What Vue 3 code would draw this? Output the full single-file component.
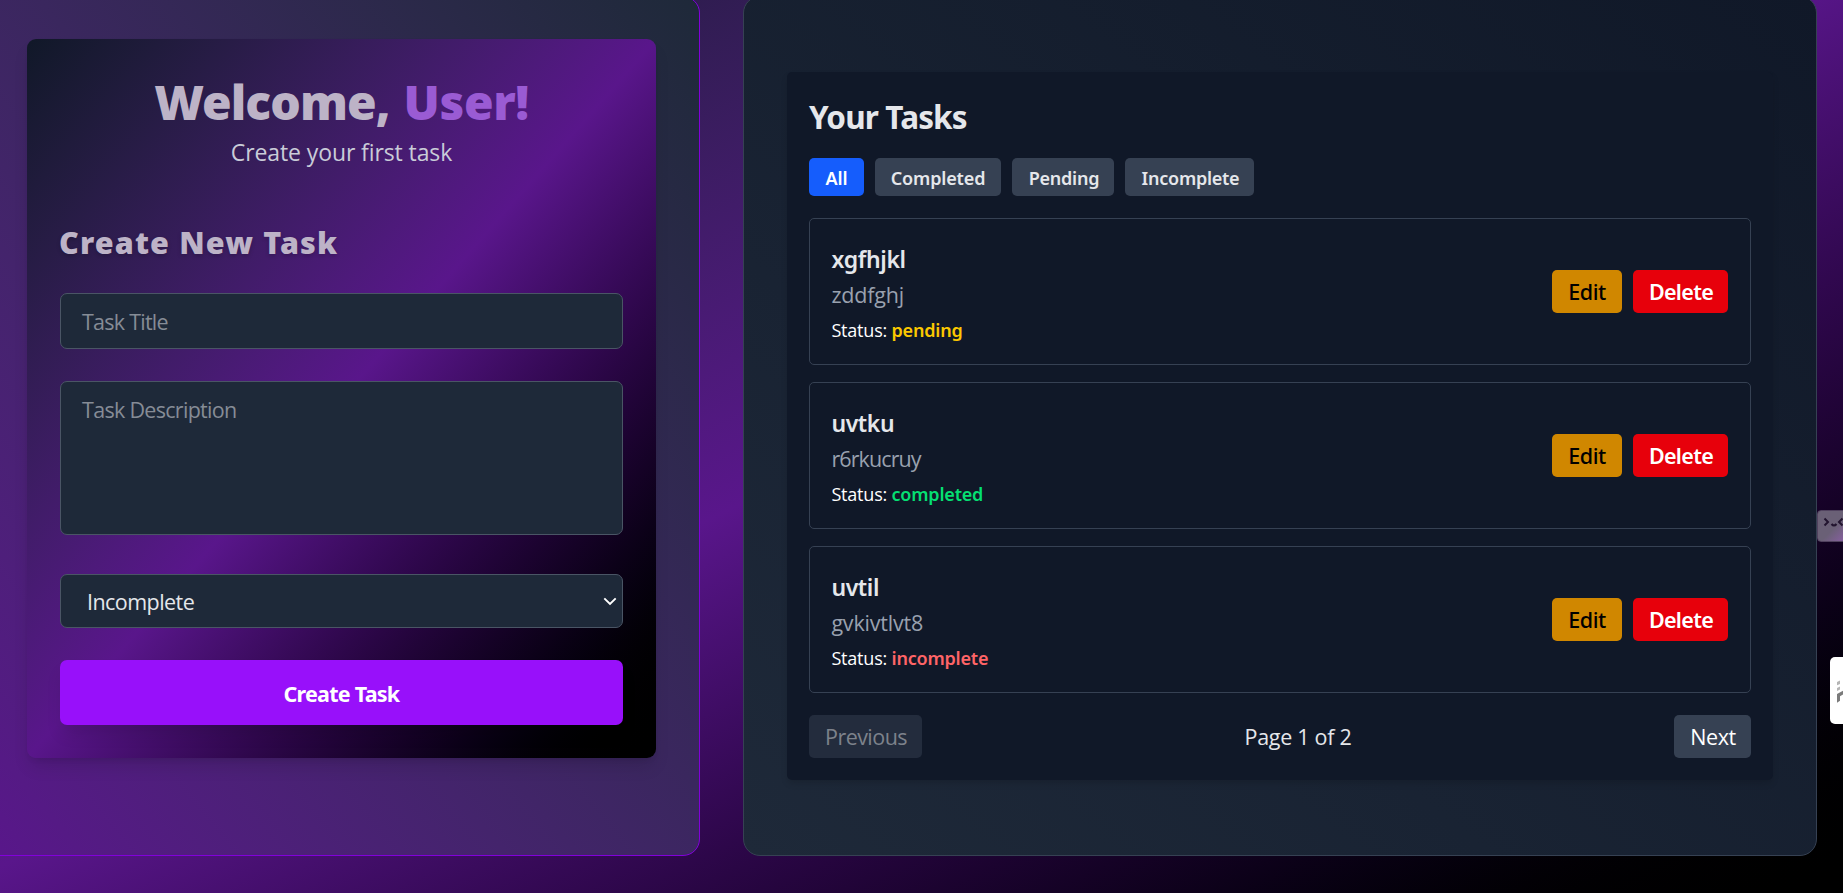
<script setup>
import { ref } from 'vue'

const filters = [
  { label: 'All', size: 'w-all' },
  { label: 'Completed', size: 'w-completed' },
  { label: 'Pending', size: 'w-pending' },
  { label: 'Incomplete', size: 'w-incomplete' },
]
const active = ref('All')

const tasks = [
  { title: 'xgfhjkl', text: 'zddfghj', status: 'pending' },
  { title: 'uvtku', text: 'r6rkucruy', status: 'completed' },
  { title: 'uvtil', text: 'gvkivtlvt8', status: 'incomplete' },
]
</script>

<template>
  <div class="viewport">
    <main class="page">
      <section class="panel panel-left">
        <form class="create" @submit.prevent>
          <h1>Welcome, <span>User!</span></h1>
          <p class="sub">Create your first task</p>
          <h2>Create New Task</h2>
          <div class="field title-field">Task Title</div>
          <div class="field desc-field">Task Description</div>
          <div class="field select-field">
            <span>Incomplete</span>
            <svg width="14" height="9" viewBox="0 0 14 9" fill="none" stroke="#fff" stroke-width="1.9">
              <path d="M1.3 1.3 7 7l5.700-5.700" />
            </svg>
          </div>
          <button class="submit">Create Task</button>
        </form>
      </section>

      <section class="panel panel-right">
        <div class="tasks">
          <h2>Your Tasks</h2>
          <div class="filters">
            <button
              v-for="f in filters"
              :key="f.label"
              :class="[f.size, { active: active === f.label }]"
              @click="active = f.label"
            >{{ f.label }}</button>
          </div>
          <div class="list">
            <article v-for="t in tasks" :key="t.title" class="task">
              <div class="info">
                <h3>{{ t.title }}</h3>
                <p class="text">{{ t.text }}</p>
                <p class="status">Status: <b :class="t.status">{{ t.status }}</b></p>
              </div>
              <div class="actions">
                <button class="edit">Edit</button>
                <button class="delete">Delete</button>
              </div>
            </article>
          </div>
          <div class="pager">
            <button class="prev">Previous</button>
            <span>Page 1 of 2</span>
            <button class="next">Next</button>
          </div>
        </div>
      </section>
    </main>

    <div class="face">
      <svg width="26" height="32" viewBox="0 0 26 32" fill="none" stroke="#22142f" stroke-width="2">
        <path d="M7.500 8.500 11 12 7.500 15.500M25.500 8.500 22 12 25.500 15.500M14.500 14q2.500 3 5 0" />
      </svg>
    </div>
    <div class="tab">
      <svg width="13" height="67" viewBox="0 0 13 67">
        <path d="M7 25l3-1.500v3.500l-3 1.200zM7 31l3-1.500v3l-3 1.500z" fill="#b5b5b5" />
        <path d="M7 37l6-3.200v3.700l-3 1.700v4.500l-3 2z" fill="#7b7b7b" />
      </svg>
    </div>
  </div>
</template>

<style>
body {
  background: #000;
  overflow: hidden;
}
</style>

<style scoped>
* {
  box-sizing: border-box;
  margin: 0;
}
.viewport {
  position: relative;
  width: 1843px;
  height: 893px;
  overflow: hidden;
  font-family: 'Open Sans', 'Noto Sans', sans-serif;
  font-size: 21.5px;
  color: #e5e7eb;
}
.page {
  display: flex;
  gap: 43px;
  width: 1908px;
  height: 934px;
  margin: -41px 0 0 -54px;
  padding: 37px;
  background: linear-gradient(to bottom right in oklab, #101828, #59168b, #000);
}
.panel {
  height: 860px;
  border-radius: 17px;
}
.panel-left {
  width: 717px;
  padding: 42px 43px;
  border: 1px solid #8200db;
  background: linear-gradient(to top right in oklab, #59168b, #1e2939);
}
.panel-right {
  width: 1074px;
  padding: 75px 43px;
  border: 1px solid #364153;
  background: linear-gradient(to bottom left in oklab, #101828, #1e2939);
}
button {
  display: flex;
  align-items: center;
  justify-content: center;
  padding: 0;
  border: 0;
  border-radius: 5px;
  color: inherit;
  font: inherit;
  white-space: nowrap;
}
.create {
  width: 629px;
  height: 719px;
  padding: 34px 33px 33px;
  border-radius: 9px;
  background: linear-gradient(to bottom right in oklab, #101828, #59168b, #000);
  box-shadow: 0 11px 17px -3px rgba(0, 0, 0, 0.12), 0 4px 7px -4px rgba(0, 0, 0, 0.12);
}
h1, h2, h3 {
  font-family: 'Noto Sans', sans-serif;
  white-space: nowrap;
}
h1 {
  font-size: 48px;
  font-weight: 900;
  line-height: 57px;
  letter-spacing: -0.95px;
  word-spacing: 2.5px;
  text-align: center;
  color: #bdb3c7;
}
h1 span {
  letter-spacing: -0.4px;
  color: #9a5bd4;
}
.sub {
  margin-top: 8px;
  font-size: 23px;
  line-height: 28px;
  letter-spacing: -0.1px;
  text-align: center;
  color: #c9ccd8;
}
.create h2 {
  margin-top: 58px;
  margin-bottom: 33px;
  margin-left: -1px;
  font-size: 30.5px;
  font-weight: 900;
  line-height: 36px;
  letter-spacing: 1.15px;
  color: #bdb3c7;
  text-shadow: 0 2px 4px rgba(0, 0, 0, 0.2);
}
.field {
  border: 1px solid #4a5565;
  border-radius: 7px;
  background: #1e2939;
  color: #868c96;
  line-height: 29px;
}
.title-field {
  height: 56px;
  padding: 13px 21px;
  letter-spacing: -0.75px;
}
.desc-field {
  height: 154px;
  margin-top: 32px;
  padding: 13px 21px;
  letter-spacing: -0.7px;
}
.select-field {
  display: flex;
  align-items: center;
  justify-content: space-between;
  height: 54px;
  margin-top: 39px;
  padding: 1px 5px 0 26px;
  color: #e5e7eb;
  letter-spacing: -0.55px;
}
.submit {
  width: 100%;
  height: 65px;
  margin-top: 32px;
  padding-top: 2px;
  border-radius: 7px;
  background: #9810fa;
  color: #fff;
  font-family: 'Noto Sans', sans-serif;
  font-weight: 700;
  letter-spacing: -0.75px;
  box-shadow: 0 11px 17px -3px rgba(0, 0, 0, 0.12);
}
.tasks {
  width: 986px;
  height: 708px;
  padding: 23px 22px 22px;
  border-radius: 5px;
  background: #101828;
  box-shadow: 0 4px 7px -1px rgba(0, 0, 0, 0.15);
}
.tasks h2 {
  font-size: 31.5px;
  font-weight: 700;
  line-height: 43px;
  letter-spacing: -0.85px;
}
.filters {
  display: flex;
  gap: 11px;
  margin: 20px 0 22px;
}
.filters button {
  height: 38px;
  padding-top: 1px;
  background: #364153;
  font-family: 'Noto Sans', sans-serif;
  font-size: 18px;
  font-weight: 600;
  letter-spacing: -0.15px;
}
.filters .active {
  background: #155dfc;
  color: #fff;
}
.w-all { width: 55px; }
.w-completed { width: 126px; }
.w-pending { width: 102px; }
.w-incomplete { width: 129px; }
.filters .w-pending,
.filters .w-incomplete {
  padding-left: 2px;
  letter-spacing: -0.25px;
}
.list {
  display: flex;
  flex-direction: column;
  gap: 16.4px;
}
.task {
  display: flex;
  justify-content: space-between;
  align-items: center;
  height: 147.4px;
  padding: 0 22px 0 21.4px;
  border: 1px solid #364153;
  border-radius: 5px;
}
.info {
  align-self: flex-start;
  padding-top: 22.4px;
}
h3 {
  font-size: 23px;
  font-weight: 600;
  line-height: 36px;
  letter-spacing: -0.4px;
}
.text {
  line-height: 35.6px;
  letter-spacing: -0.2px;
  color: #99a1af;
}
.task:nth-child(2) .text {
  letter-spacing: -0.9px;
}
.status {
  font-size: 18px;
  line-height: 35.6px;
  letter-spacing: -0.2px;
  color: #fff;
}
.status b {
  font-family: 'Noto Sans', sans-serif;
  font-weight: 600;
  letter-spacing: -0.2px;
}
.pending { color: #fcc800; }
.completed { color: #05df72; }
.incomplete { color: #ff6467; }
.actions {
  display: flex;
  gap: 11px;
}
.actions button {
  height: 43px;
  font-family: 'Noto Sans', sans-serif;
}
.actions .edit {
  width: 70px;
  background: #d08700;
  color: #000;
  font-weight: 500;
  letter-spacing: -0.4px;
}
.actions .delete {
  width: 95px;
  padding-left: 1px;
  background: #e7000b;
  color: #fff;
  font-weight: 600;
  letter-spacing: -0.7px;
}
.pager {
  display: flex;
  justify-content: space-between;
  align-items: center;
  height: 43px;
  margin-top: 22px;
  letter-spacing: -0.3px;
}
.pager button {
  height: 43px;
}
.prev {
  width: 113px;
  background: #232c3d;
  color: #7d828b;
  letter-spacing: -0.55px;
}
.next {
  width: 77px;
  padding-left: 1px;
  background: #364153;
  color: #fff;
  letter-spacing: -0.4px;
}
.pager .prev {
  padding-left: 1px;
}
.face {
  position: absolute;
  left: 1817px;
  top: 510px;
  width: 32px;
  height: 32px;
  border: 1px solid #51425f;
  border-radius: 4px;
  background: linear-gradient(to bottom right, #6a6076 55%, #8b5fa6);
}
.face svg {
  display: block;
  margin: -1px;
}
.tab {
  position: absolute;
  left: 1830px;
  top: 657px;
  width: 20px;
  height: 67px;
  border-radius: 5px;
  background: #fff;
}
.tab svg {
  display: block;
}
</style>
